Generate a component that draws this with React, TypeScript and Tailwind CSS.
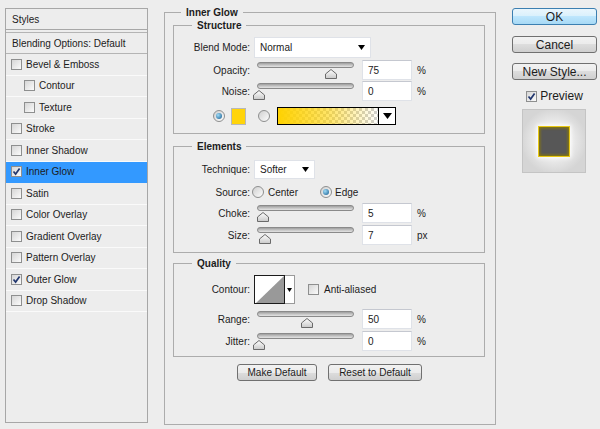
import React from 'react';

const layers = [
  { name: 'Bevel & Emboss' },
  { name: 'Contour', sub: true },
  { name: 'Texture', sub: true },
  { name: 'Stroke' },
  { name: 'Inner Shadow' },
  { name: 'Inner Glow', on: true, active: true },
  { name: 'Satin' },
  { name: 'Color Overlay' },
  { name: 'Gradient Overlay' },
  { name: 'Pattern Overlay' },
  { name: 'Outer Glow', on: true },
  { name: 'Drop Shadow' },
];

const Check: React.FC<{ on?: boolean }> = ({ on }) => (
  <span className="flex h-[11px] w-[11px] shrink-0 items-center justify-center border border-[#8e8f8f] bg-linear-to-br from-[#d6d6d6] to-[#fbfbfb]">
    {on && (
      <svg width="9" height="9" viewBox="0 0 9 9">
        <path d="M1.5 4.5 L3.6 7 L7.6 1.4" fill="none" stroke="#22376f" strokeWidth="1.7" />
      </svg>
    )}
  </span>
);

const Radio: React.FC<{ on?: boolean }> = ({ on }) => (
  <span className="flex h-[12px] w-[12px] shrink-0 items-center justify-center rounded-full border border-[#8e8f8f] bg-linear-to-br from-[#d0d0d0] to-[#fdfdfd]">
    {on && <span className="h-[6px] w-[6px] rounded-full bg-[radial-gradient(circle_at_35%_35%,#9fdcf7,#13598e)]" />}
  </span>
);

const Arrow: React.FC<{ w?: number }> = ({ w = 7 }) => (
  <svg width={w} height={Math.ceil(w / 2) + 1} viewBox={`0 0 ${w} ${Math.ceil(w / 2) + 1}`}>
    <path d={`M0 0 H${w} L${w / 2} ${Math.ceil(w / 2) + 1} Z`} fill="#000" />
  </svg>
);

const Slider: React.FC<{ pos: number }> = ({ pos }) => (
  <div className="relative h-[20px] w-[97px] shrink-0">
    <div className="mt-[4px] h-[6px] rounded-full border border-[#8a8a8a] bg-linear-to-b from-[#9e9e9e] via-[#c4c4c4] to-[#e4e4e4]" />
    <svg className="absolute top-[7px]" style={{ left: pos - 6 }} width="12" height="10" viewBox="0 0 12 10">
      <defs>
        <linearGradient id="th" x1="0" y1="0" x2="0" y2="1">
          <stop offset="0" stopColor="#ffffff" />
          <stop offset="1" stopColor="#c9c9c9" />
        </linearGradient>
      </defs>
      <path d="M0.5 9.5 V5 L6 0.5 L11.5 5 V9.5 Z" fill="url(#th)" stroke="#6a6a6a" />
    </svg>
  </div>
);

const Field: React.FC<{ value: string }> = ({ value }) => (
  <div className="flex h-[20px] w-[50px] shrink-0 items-center border border-[#dfe2e8] border-t-[#c5c8d0] bg-white pl-[5px]">{value}</div>
);

const SliderRow: React.FC<{ label: string; pos: number; value: string; unit: string; className?: string }> = ({ label, pos, value, unit, className }) => (
  <div className={`flex h-[20px] items-center ${className ?? ''}`}>
    <span className="w-[76px] text-right">{label}</span>
    <div className="ml-[7px]">
      <Slider pos={pos} />
    </div>
    <div className="ml-[8px]">
      <Field value={value} />
    </div>
    <span className="ml-[5px]">{unit}</span>
  </div>
);

const Select: React.FC<{ value: string; className: string }> = ({ value, className }) => (
  <div className={`flex items-center justify-between border border-[#dfe2e8] bg-white pl-[5px] pr-[5px] ${className}`}>
    <span>{value}</span>
    <Arrow />
  </div>
);

const WinButton: React.FC<{ children: React.ReactNode; primary?: boolean; className: string }> = ({ children, primary, className }) => (
  <div
    className={`flex items-center justify-center rounded-[3px] border ${
      primary
        ? 'border-[#3c7fb1] bg-[linear-gradient(#eaf6fd,#d9f0fc_50%,#bee6fd_50%,#a7d9f5)]'
        : 'border-[#707070] bg-[linear-gradient(#f2f2f2,#ebebeb_50%,#dddddd_50%,#cfcfcf)]'
    } ${className}`}
  >
    {children}
  </div>
);

const Legend: React.FC<{ children: React.ReactNode; className: string }> = ({ children, className }) => (
  <legend className={`px-[5px] text-[10px] font-bold leading-[13px] ${className}`}>{children}</legend>
);

export default function App() {
  return (
    <div className="flex h-[429px] w-[600px] overflow-hidden bg-[#ededed] font-['Liberation_Sans',Arial,sans-serif] text-[10px] text-[#1c1c1c]">
      {/* styles list */}
      <div className="ml-[5px] mt-[8px] h-[415px] w-[143px] shrink-0 border border-[#a7a7a7]">
        <div className="flex h-[21px] items-center border-b border-[#a7a7a7] pl-[6px]">Styles</div>
        <div className="h-[2px]" />
        <div className="flex h-[22px] items-center border-y border-[#b4b4b4] pl-[6px]">Blending Options: Default</div>
        {layers.map((l) => (
          <div
            key={l.name}
            className={`flex h-[21.5px] items-center border-b ${l.active ? 'border-[#3399ff] bg-[#3399ff]' : 'border-[#fafafa]'} ${l.sub ? 'pl-[18px]' : 'pl-[5px]'}`}
          >
            <Check on={l.on} />
            <span className="ml-[4px]">{l.name}</span>
          </div>
        ))}
      </div>

      {/* settings */}
      <fieldset className="ml-[16px] mt-[6px] h-[419px] w-[332px] shrink-0 border border-[#acacac]">
        <Legend className="ml-[16px]">Inner Glow</Legend>

        <fieldset className="ml-[8px] w-[312px] border border-[#acacac] pb-[7px]">
          <Legend className="ml-[18px]">Structure</Legend>
          <div className="mt-[5px] flex h-[21px] items-center">
            <span className="w-[76px] text-right">Blend Mode:</span>
            <Select value="Normal" className="ml-[4px] h-[21px] w-[117px]" />
          </div>
          <SliderRow className="mt-[2px]" label="Opacity:" pos={74} value="75" unit="%" />
          <SliderRow className="mt-[1px]" label="Noise:" pos={2} value="0" unit="%" />
          <div className="mt-[5px] flex h-[20px] items-center">
            <span className="ml-[39px]">
              <Radio on />
            </span>
            <span className="ml-[6px] h-[17px] w-[15px] border border-[#b8b8b8] bg-[#ffd40a]" />
            <span className="ml-[12px]">
              <Radio />
            </span>
            <div className="ml-[7px] flex h-[18px] w-[119px] border border-black">
              <div className="flex-1 bg-[repeating-conic-gradient(#cfcfcf_0%_25%,#ffffff_0%_50%)] bg-[length:6px_6px]">
                <div className="h-full w-full bg-linear-to-r from-[#ffd200] via-[#ffd200]/60 to-transparent" />
              </div>
              <div className="flex w-[17px] items-center justify-center border-l border-black bg-white">
                <Arrow w={9} />
              </div>
            </div>
          </div>
        </fieldset>

        <fieldset className="ml-[8px] mt-[6px] w-[312px] border border-[#acacac] pb-[7px]">
          <Legend className="ml-[18px]">Elements</Legend>
          <div className="mt-[6px] flex h-[20px] items-center">
            <span className="w-[76px] text-right">Technique:</span>
            <Select value="Softer" className="ml-[4px] h-[19px] w-[61px]" />
          </div>
          <div className="mt-[3px] flex h-[20px] items-center">
            <span className="w-[76px] text-right">Source:</span>
            <span className="ml-[2px]">
              <Radio />
            </span>
            <span className="ml-[4px]">Center</span>
            <span className="ml-[22px]">
              <Radio on />
            </span>
            <span className="ml-[3px]">Edge</span>
          </div>
          <SliderRow className="mt-[1px]" label="Choke:" pos={6} value="5" unit="%" />
          <SliderRow className="mt-[2px]" label="Size:" pos={8} value="7" unit="px" />
        </fieldset>

        <fieldset className="ml-[8px] mt-[4px] w-[312px] border border-[#acacac] pb-[5px]">
          <Legend className="ml-[18px]">Quality</Legend>
          <div className="mt-[5px] flex h-[29px] items-center">
            <span className="w-[76px] text-right">Contour:</span>
            <div className="ml-[4px] flex h-[29px]">
              <div className="w-[31px] border border-[#1b1b1b] bg-white">
                <svg width="29" height="27" viewBox="0 0 29 27" className="block">
                  <path d="M1 27 L29 0 V27 Z" fill="#999999" />
                </svg>
              </div>
              <div className="flex w-[10px] items-center justify-center border border-l-0 border-[#9a9a9a] bg-white">
                <Arrow w={5} />
              </div>
            </div>
            <span className="ml-[13px]">
              <Check />
            </span>
            <span className="ml-[5px]">Anti-aliased</span>
          </div>
          <SliderRow className="mt-[5px]" label="Range:" pos={50} value="50" unit="%" />
          <SliderRow className="mt-[2px]" label="Jitter:" pos={2} value="0" unit="%" />
        </fieldset>

        <div className="mt-[7px] flex">
          <WinButton className="ml-[72px] h-[17px] w-[80px]">Make Default</WinButton>
          <WinButton className="ml-[11px] h-[17px] w-[94px]">Reset to Default</WinButton>
        </div>
      </fieldset>

      {/* actions */}
      <div className="ml-[16px] flex w-[85px] shrink-0 flex-col text-[12px]">
        <WinButton primary className="mt-[8px] h-[17px]">OK</WinButton>
        <WinButton className="mt-[11px] h-[17px]">Cancel</WinButton>
        <WinButton className="mt-[10px] h-[17px]">New Style...</WinButton>
        <div className="mt-[9px] flex h-[14px] items-center justify-center">
          <Check on />
          <span className="ml-[3px]">Preview</span>
        </div>
        <div className="ml-[10px] mt-[6px] flex h-[64px] w-[64px] items-center justify-center border border-[#c4c4c4] bg-[radial-gradient(circle,#f6f6f6_25%,#d5d5d5_75%)]">
          <div className="h-[31px] w-[32px] border border-[#e8c814] bg-[#575757] shadow-[inset_0_0_3px_1px_#8f7d00,0_0_4px_1px_#ffffff]" />
        </div>
      </div>
    </div>
  );
}
